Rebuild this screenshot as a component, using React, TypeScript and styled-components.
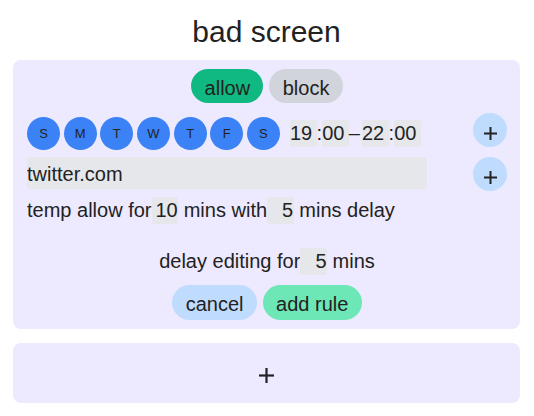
import React from 'react'
import styled, { createGlobalStyle } from 'styled-components'

const COLORS = {
  TEXT: '#222222',
  CARD: '#ede9fe',
  FIELD: '#e5e7eb',
  ALLOW: '#10b981',
  BLOCK: '#d1d5db',
  DAY: '#3b82f6',
  SOFT_BLUE: '#bfdbfe',
  SOFT_GREEN: '#6ee7b7',
}

const GlobalStyle = createGlobalStyle`
  body {
    margin: 0;
    background: #ffffff;
    color: ${COLORS.TEXT};
    font-family: "Liberation Sans", Arial, sans-serif;
  }
`

const StyledPage = styled.div`
  padding: 0 14px 0 13px;
`

const StyledTitle = styled.h1`
  margin: 0 0 11px;
  padding-top: 15px;
  font-size: 30px;
  font-weight: normal;
  line-height: 34px;
  text-align: center;
`

const StyledCard = styled.section`
  display: flex;
  flex-direction: column;
  background: ${COLORS.CARD};
  border-radius: 8px;
  padding: 9px 13px 9px 14px;
`

const StyledCenterRow = styled.div<{ $top?: number }>`
  display: flex;
  justify-content: center;
  gap: 6px;
  margin-top: ${(p) => p.$top || 0}px;
`

const StyledPill = styled.button<{ $bg: string; $h?: number }>`
  height: ${(p) => p.$h || 34}px;
  padding: 3px 13.3px 0;
  border: none;
  border-radius: 9999px;
  background: ${(p) => p.$bg};
  color: ${COLORS.TEXT};
  font-family: inherit;
  font-size: 20px;
  line-height: 1;
`

const StyledSplitRow = styled.div<{ $top: number }>`
  display: flex;
  justify-content: space-between;
  align-items: flex-start;
  margin-top: ${(p) => p.$top}px;
`

const StyledSchedule = styled.div`
  display: flex;
  align-items: center;
  margin-top: 4px;
`

const StyledDays = styled.div`
  display: flex;
  gap: 3.67px;
  margin-right: 10px;
`

const StyledDay = styled.span`
  display: flex;
  align-items: center;
  justify-content: center;
  width: 33px;
  height: 33px;
  border-radius: 50%;
  background: ${COLORS.DAY};
  font-size: 13px;
`

const StyledTime = styled.div`
  display: flex;
  align-items: center;
  font-size: 20px;
  line-height: 27px;
`

const StyledDash = styled.span`
  margin-right: 2px;
`

const StyledNumBox = styled.input<{ $align?: 'left' | 'right' }>`
  box-sizing: border-box;
  width: 26.67px;
  height: 27px;
  padding: 0 ${(p) => (p.$align === 'left' ? '0' : '0.5px')} 0 0;
  border: none;
  border-radius: 2px;
  background: ${COLORS.FIELD};
  color: ${COLORS.TEXT};
  font-family: inherit;
  font-size: 20px;
  text-align: ${(p) => p.$align || 'right'};
  vertical-align: top;
  outline: none;
`

const StyledRoundAdd = styled.button`
  display: flex;
  justify-content: center;
  align-items: center;
  width: 34px;
  height: 34px;
  padding: 6px 0 0;
  border: none;
  border-radius: 50%;
  background: ${COLORS.SOFT_BLUE};
  color: ${COLORS.TEXT};
`

const StyledSiteInput = styled.input`
  box-sizing: border-box;
  width: 400px;
  height: 32px;
  padding: 2px 0 0;
  border: none;
  border-radius: 3px;
  background: ${COLORS.FIELD};
  color: ${COLORS.TEXT};
  font-family: inherit;
  font-size: 20px;
  outline: none;
`

const StyledTextRow = styled.div<{ $top: number; $center?: boolean }>`
  margin-top: ${(p) => p.$top}px;
  font-size: 20px;
  line-height: 27px;
  height: 27px;
  white-space: nowrap;
  text-align: ${(p) => (p.$center ? 'center' : 'left')};
`

const StyledAddCard = styled.button`
  display: flex;
  justify-content: center;
  align-items: center;
  box-sizing: border-box;
  width: 100%;
  height: 60px;
  margin-top: 14px;
  padding: 4px 0 0;
  border: none;
  border-radius: 8px;
  background: ${COLORS.CARD};
  color: ${COLORS.TEXT};
`

const PlusIcon: React.FC<{ size: number; stroke: number }> = ({ size, stroke }) => (
  <svg width={size} height={size} viewBox={`0 0 ${size} ${size}`}>
    <line x1={size / 2} y1={0} x2={size / 2} y2={size} stroke="currentColor" strokeWidth={stroke} />
    <line x1={0} y1={size / 2} x2={size} y2={size / 2} stroke="currentColor" strokeWidth={stroke} />
  </svg>
)

const days = ['S', 'M', 'T', 'W', 'T', 'F', 'S']

export default function App() {
  return (
    <>
      <GlobalStyle />
      <StyledPage>
        <StyledTitle>bad screen</StyledTitle>
        <StyledCard>
          <StyledCenterRow>
            <StyledPill $bg={COLORS.ALLOW}>allow</StyledPill>
            <StyledPill $bg={COLORS.BLOCK}>block</StyledPill>
          </StyledCenterRow>

          <StyledSplitRow $top={10}>
            <StyledSchedule>
              <StyledDays>
                {days.map((d, i) => (
                  <StyledDay key={i}>{d}</StyledDay>
                ))}
              </StyledDays>
              <StyledTime>
                <StyledNumBox $align="left" readOnly value="19" />
                <span>:</span>
                <StyledNumBox $align="left" readOnly value="00" />
                <StyledDash>–</StyledDash>
                <StyledNumBox $align="left" readOnly value="22" />
                <span>:</span>
                <StyledNumBox $align="left" readOnly value="00" />
              </StyledTime>
            </StyledSchedule>
            <StyledRoundAdd>
              <PlusIcon size={13} stroke={2} />
            </StyledRoundAdd>
          </StyledSplitRow>

          <StyledSplitRow $top={7}>
            <StyledSiteInput readOnly value="twitter.com" />
            <StyledRoundAdd>
              <PlusIcon size={13} stroke={2} />
            </StyledRoundAdd>
          </StyledSplitRow>

          <StyledTextRow $top={6}>
            temp allow for<StyledNumBox readOnly value="10" /> mins with<StyledNumBox readOnly value="5" /> mins delay
          </StyledTextRow>

          <StyledTextRow $top={24} $center>
            delay editing for<StyledNumBox readOnly value="5" /> mins
          </StyledTextRow>

          <StyledCenterRow $top={10}>
            <StyledPill $bg={COLORS.SOFT_BLUE} $h={35}>cancel</StyledPill>
            <StyledPill $bg={COLORS.SOFT_GREEN} $h={35}>add rule</StyledPill>
          </StyledCenterRow>
        </StyledCard>

        <StyledAddCard>
          <PlusIcon size={15} stroke={2.2} />
        </StyledAddCard>
      </StyledPage>
    </>
  )
}
